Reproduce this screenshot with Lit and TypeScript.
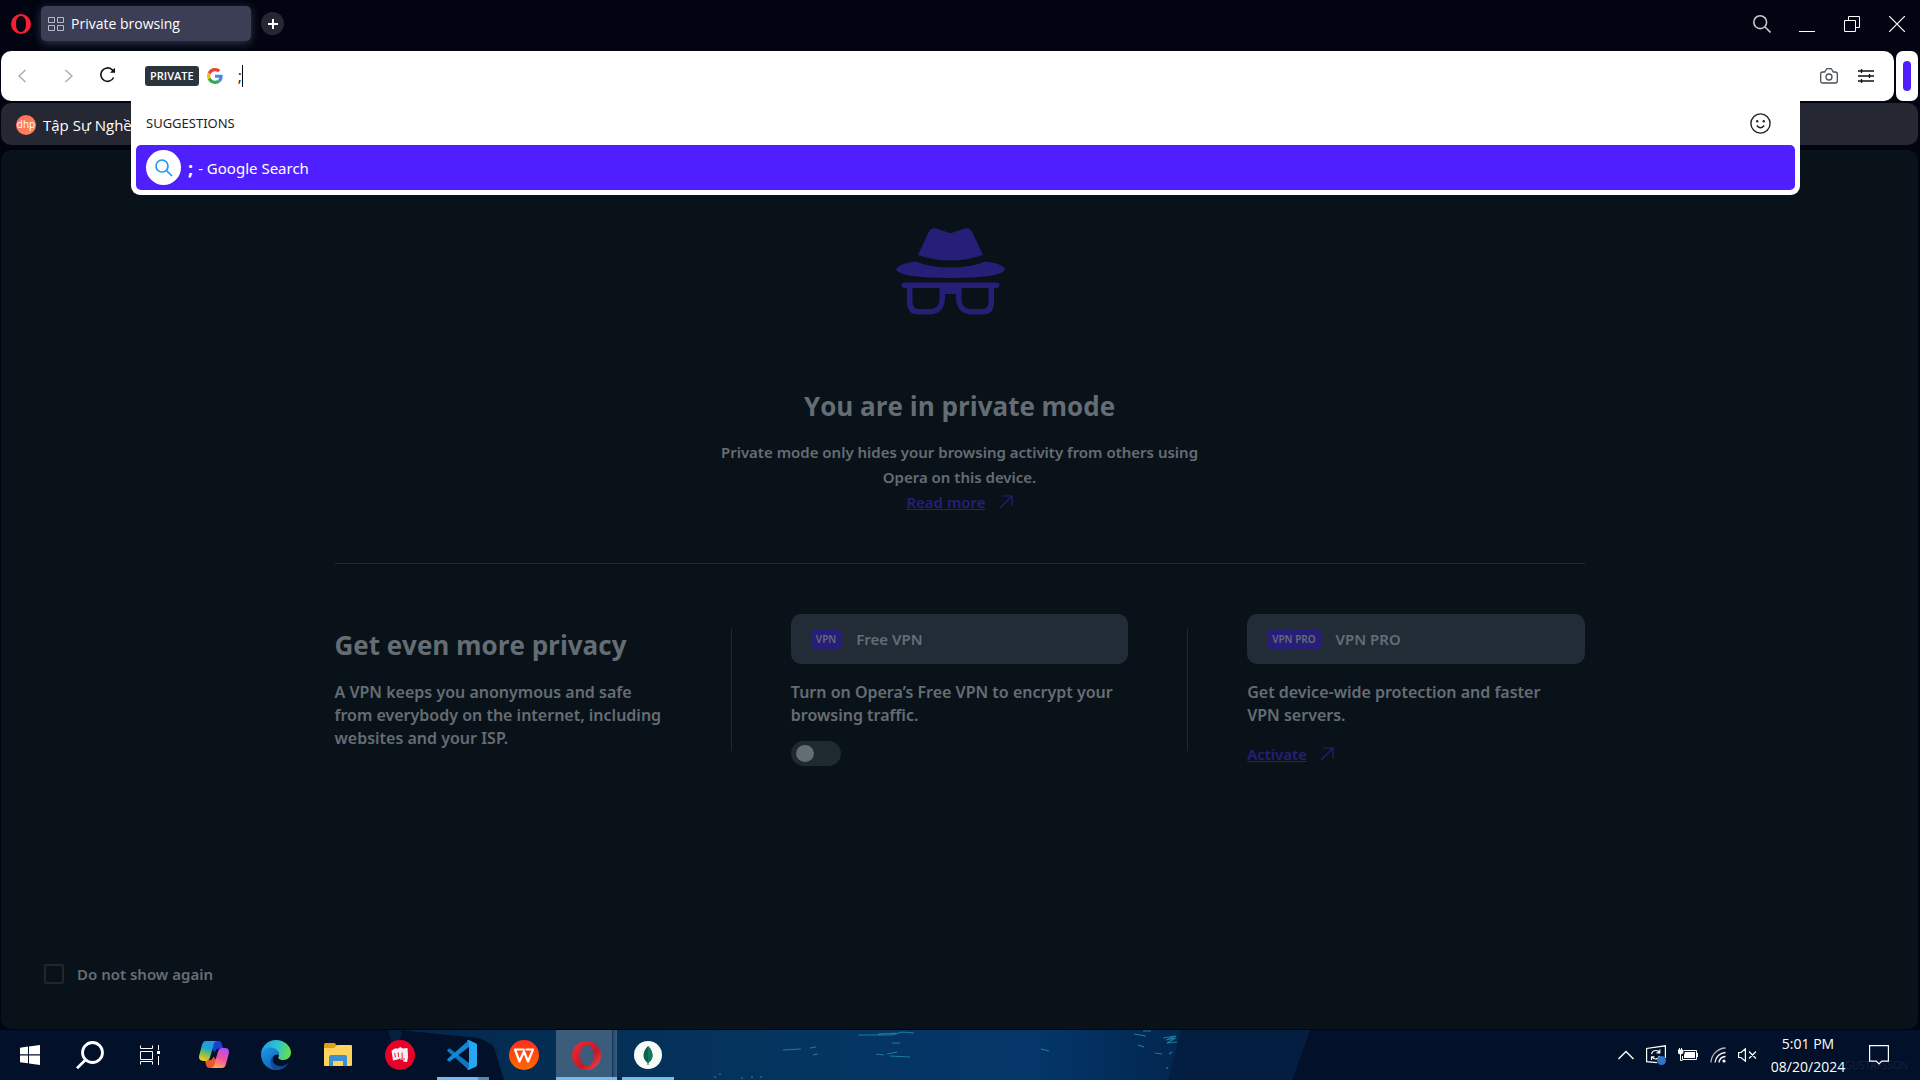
import { LitElement, html, css, svg } from "lit";
import { customElement, state } from "lit/decorators.js";

const arrow = html`<svg class="arrow" width="14" height="14" viewBox="0 0 14 14" fill="none" stroke="currentColor" stroke-width="1.2" aria-hidden="true"><path d="M3 1h10v10M13 1L1 13"/></svg>`;

const operaGradient = svg`<linearGradient id="op" x1="0" y1="0" x2="1" y2="1"><stop offset="0" stop-color="#e8303a"/><stop offset=".6" stop-color="#c81724"/><stop offset="1" stop-color="#f0505a"/></linearGradient>`;

interface App {
  name: string;
  icon: unknown;
  state?: "running" | "active" | "stacked";
}

const apps: App[] = [
  {
    name: "Start",
    icon: html`<svg width="20" height="20" viewBox="0 0 20 20" fill="#fff"><path d="M0 2.7L8 1.6V9.3H0zM9 1.4L20 0v9.3H9zM0 10.4h8v7.9L0 17.2zM9 10.4h11V20L9 18.5z"/></svg>`,
  },
  {
    name: "Search",
    icon: html`<svg width="28" height="28" viewBox="0 0 28 28" fill="none" stroke="#fff" stroke-width="2.8"><circle cx="16.5" cy="11.5" r="10"/><path d="M9.4 19L1 27.2"/></svg>`,
  },
  {
    name: "Task View",
    icon: html`<svg width="20" height="20" viewBox="0 0 20 20" fill="none" stroke="#fff" stroke-width="1"><path d="M.5 .5v3h12v-3M.5 6.500h12v8H.5zM.5 19.500v-3h12v3M18.500 0v5M18.500 11v9"/><rect x="17" y="6" width="3" height="3" fill="#fff" stroke="none"/></svg>`,
  },
  {
    name: "Copilot",
    icon: html`<svg width="30" height="28" viewBox="0 0 30 28">
      <defs>
        <linearGradient id="c1" x1=".6" y1="0" x2=".3" y2="1"><stop offset="0" stop-color="#1b9af2"/><stop offset=".4" stop-color="#20a5c8"/><stop offset=".7" stop-color="#8ac04a"/><stop offset="1" stop-color="#f6cf10"/></linearGradient>
        <linearGradient id="c2" x1=".7" y1="0" x2=".3" y2="1"><stop offset="0" stop-color="#b24df0"/><stop offset=".5" stop-color="#f0549c"/><stop offset="1" stop-color="#ffa95e"/></linearGradient>
      </defs>
      <path d="M16 0h3.500c2 0 2.800 1.200 3.400 3l1.300 4.700h-4c-2.500 0-3.500 1-4.200 3.500l-3-3z" fill="#1b3fd0"/>
      <path d="M14 27h-3.500c-2 0-2.800-1.200-3.400-3L6 19.300h4c2.500 0 3.500-1 4.200-3.500l3 3z" fill="#f0562e"/>
      <path d="M7 0h11c-2 .3-2.800 2-3.400 4l-3.300 11.500c-.9 3-2 4.500-5 4.500H4c-3.500 0-4.600-2.600-3.700-6L3 4C3.700 1.500 4.800 0 7 0z" fill="url(#c1)"/>
      <path d="M23 27H12c2-.3 2.800-2 3.400-4l3.300-11.500c.9-3 2-4.500 5-4.500H26c3.500 0 4.600 2.600 3.700 6L27 23c-.7 2.500-1.800 4-4 4z" fill="url(#c2)"/>
    </svg>`,
  },
  {
    name: "Microsoft Edge",
    icon: html`<svg width="30" height="30" viewBox="0 0 30 30">
      <defs>
        <linearGradient id="e1" x1="0" y1=".3" x2="1" y2=".5"><stop offset="0" stop-color="#1e9de8"/><stop offset=".5" stop-color="#2cc3d2"/><stop offset="1" stop-color="#64e048"/></linearGradient>
        <linearGradient id="e2" x1="0" y1="0" x2=".6" y2="1"><stop offset="0" stop-color="#1c9be6"/><stop offset="1" stop-color="#0f62b8"/></linearGradient>
      </defs>
      <path d="M0 14C.6 6 7 0 15 0s15 6 15 12.500c0 4.500-3.500 7.500-7.500 7.500-4 0-6-1.500-5-3 2-3-.5-8-7-8C5 9 1.500 11 0 14z" fill="url(#e1)"/>
      <path d="M0 14c1.500-4.500 5.500-7 10-6.500 5.500.5 8.500 4 8 8-1.500-2-6-1-6.500 3-.6 5 4 9.500 7.500 11C8 32 0 24 0 14z" fill="url(#e2)"/>
      <path d="M11.700 16.500c-2 6 4 11 10 9.500 2.500-.6 4.500-2 6-3.500C24 28.500 19 30.500 15 30 9 28.500 8 20 11.700 16.500z" fill="#104c92"/>
    </svg>`,
  },
  {
    name: "File Explorer",
    icon: html`<svg width="28" height="24" viewBox="0 0 28 24">
      <path d="M0 1.500Q0 0 1.500 0h9L13 2.500V6H0z" fill="#e0a010"/><path d="M0 5h10l3-3h14q1 0 1 1v19q0 1-1 1H1q-1 0-1-1z" fill="#ffd45e"/>
      <path d="M5 23v-9q0-2 2-2h14q2 0 2 2v9h-4v-5H9v5z" fill="#3d8fd6"/>
    </svg>`,
  },
  {
    name: "Launcher",
    icon: html`<svg width="30" height="30" viewBox="0 0 30 30"><circle cx="15" cy="15" r="15" fill="#ea0029"/>
      <path d="M6.500 10.800l3.700-2.500 2.300.4L15.500 7l2.200 1.400L22.500 8l.6 9-1 5-3.800-.6v-1.600h-3l-.2-1.400-2.600 1L8 20.600z" fill="#f7eff0"/><path d="M9.800 13l.5 4.500M13.200 12.500l.3 4.500M17 12.500l.2 5.500M15.500 19h4.500" fill="none" stroke="#ea0029" stroke-width=".9"/></svg>`,
  },
  {
    name: "Visual Studio Code",
    state: "stacked",
    icon: html`<svg width="30" height="30" viewBox="0 0 30 30">
      <path d="M2.500 8.200L22 23v7L.6 11.200q-.8-1 0-1.800z" fill="#0a7ac4"/><path d="M2.500 21.800L22 7V0L.6 18.800q-.8 1 0 1.800z" fill="#1486d2"/><path d="M21.500 0l7.300 3.200Q30 3.800 30 5v20q0 1.200-1.200 1.800L21.500 30q-1 0-1.500-1l2-1.500v-25L20 1q.5-1 1.500-1z" fill="#25a8f2"/>
    </svg>`,
  },
  {
    name: "WPS Office",
    icon: html`<svg width="30" height="30" viewBox="0 0 30 30"><defs><linearGradient id="w" x1="0" y1="0" x2="0" y2="1"><stop offset="0" stop-color="#ff2d1a"/><stop offset="1" stop-color="#ff6a00"/></linearGradient></defs><circle cx="15" cy="15" r="15" fill="url(#w)"/>
      <path d="M15 9.500H6l4.500 12L15 11.500l4 10 5-12h-6.500" fill="none" stroke="#fff" stroke-width="2.200" stroke-linejoin="round" stroke-linecap="round"/></svg>`,
  },
  {
    name: "Opera",
    state: "active",
    icon: html`<svg width="29" height="29" viewBox="0 0 29 29"><defs>${operaGradient}</defs><path fill-rule="evenodd" fill="url(#op)" d="M14.500 0a14.500 14.500 0 1 0 0 29a14.500 14.500 0 1 0 0-29zM15.500 4.200c4 0 6 4.600 6 10.300s-2 10.300-6 10.300-7.500-4.600-7.500-10.300S11.500 4.200 15.500 4.200z"/></svg>`,
  },
  {
    name: "MongoDB Compass",
    state: "running",
    icon: html`<svg width="28" height="28" viewBox="0 0 28 28"><circle cx="14" cy="14" r="14" fill="#f9fbfa"/><path d="M14 5c3 3 4.500 6 4.500 9.500 0 3-1.500 5.500-4 7.300V24h-1v-2.200c-2.500-1.800-4-4.300-4-7.300C9.500 11 11 8 14 5z" fill="#116149"/><path d="M14 5c3 3 4.500 6 4.500 9.500 0 3-1.500 5.500-4.500 7.500z" fill="#13795b"/></svg>`,
  },
];

@customElement("opera-titlebar")
class OperaTitlebar extends LitElement {
  static styles = css`
    :host { display: flex; align-items: center; height: 51px; padding: 0 13px 0 11px; color: #fff; font-family: "Open Sans", "Noto Sans", sans-serif; }
    button { border: 0; background: none; color: inherit; padding: 0; font: inherit; display: flex; align-items: center; justify-content: center; }
    svg { display: block; }
    .bar { display: flex; align-items: center; width: 100%; padding-bottom: 4px; }
    .tab { width: 210px; height: 35px; margin: 0 10px; padding: 0 7px; gap: 7px; justify-content: flex-start; background: #3b3e54; border-radius: 5px; box-shadow: 0 2px 8px #34374d; font-size: 14px; }
    .plus { width: 23px; height: 23px; border-radius: 50%; background: #252833; }
    .controls { margin-left: auto; display: flex; gap: 25px; }
    .controls button { width: 20px; height: 20px; }
  `;
  render() {
    return html`<div class="bar">
      <button aria-label="Opera menu"><svg width="20" height="20" viewBox="0 0 20 20"><path fill="#fa1e32" fill-rule="evenodd" d="M10 0a10 10 0 1 0 0 20a10 10 0 1 0 0-20zM10 2c3.500 0 5 3.700 5 8s-1.500 8-5 8-5-3.700-5-8 1.500-8 5-8z"/></svg></button>
      <button class="tab"><svg width="16" height="14" viewBox="0 0 16 14" fill="none" stroke="#b9bbc8"><path d="M.5 .5h6v5h-6zM9.500 .5h6v5h-6zM.5 8.500h6v5h-6zM9.500 8.500h6v5h-6z"/></svg><span>Private browsing</span></button>
      <button class="plus" aria-label="New tab"><svg width="10" height="10" viewBox="0 0 10 10" stroke="#fff" stroke-width="2"><path d="M5 0v10M0 5h10"/></svg></button>
      <div class="controls">
        <button aria-label="Search tabs"><svg width="18" height="18" viewBox="0 0 18 18" fill="none" stroke="#c6c8d0" stroke-width="1.600"><circle cx="7.200" cy="7.200" r="6.400"/><path d="M11.800 11.800L17.500 17.500"/></svg></button>
        <button aria-label="Minimize"><svg width="16" height="16" viewBox="0 0 16 16" stroke="#fff"><path d="M0 15.500h16"/></svg></button>
        <button aria-label="Restore"><svg width="16" height="16" viewBox="0 0 16 16" fill="none" stroke="#fff"><path d="M.5 4.500h11v11H.5zM4.500 4.500v-4h11v11h-4"/></svg></button>
        <button aria-label="Close"><svg width="16" height="16" viewBox="0 0 16 16" stroke="#fff" stroke-width="1.200"><path d="M0 0l16 16M16 0L0 16"/></svg></button>
      </div></div>`;
  }
}

@customElement("opera-toolbar")
class OperaToolbar extends LitElement {
  static styles = css`
    :host { display: block; position: relative; z-index: 2; padding: 0 2px 0 1px; font-family: "Open Sans", "Noto Sans", sans-serif; color: #1c1e26; }
    button { border: 0; background: none; color: inherit; padding: 0; font: inherit; display: flex; align-items: center; justify-content: center; }
    svg { display: block; }
    .row { display: flex; gap: 2px; }
    .address { flex: 1; display: flex; align-items: center; height: 50px; background: #fff; border-radius: 10px; padding: 0 20px 0 17px; }
    .nav { display: flex; align-items: center; gap: 39px; color: #a6a7ab; }
    .reload { margin: 0 29px 3px 27px; }
    .badge { height: 20px; padding: 0 5px; margin-right: 8px; border-radius: 3px; background: #29343c; color: #fff; font-size: 11px; font-weight: 600; line-height: 20px; }
    .field { flex: 1; display: flex; align-items: center; margin-left: 15px; }
    input { border: 0; outline: 0; padding: 0; background: none; width: 4px; font: 16px "Open Sans", sans-serif; color: #1c1e26; overflow: hidden; }
    .caret { width: 1px; height: 22px; background: #000; }
    .tools { display: flex; gap: 20px; align-items: center; }
    .side { width: 22px; height: 50px; background: #fff; border-radius: 7px; }
    .side i { width: 8px; height: 30px; border-radius: 4px; background: #4f1fff; }
    .bookmarks { display: flex; align-items: center; height: 42px; margin-top: 2px; padding: 0 15px; background: #252833; border-radius: 10px; color: #fff; font-size: 15px; }
    .bookmarks a { display: flex; align-items: center; gap: 7px; padding-top: 2px; color: inherit; text-decoration: none; white-space: nowrap; }
    .dhp { width: 20px; height: 20px; border-radius: 50%; background: linear-gradient(135deg, #ff6a5e, #ff8a5a); font-size: 10px; line-height: 19px; text-align: center; }
    .drop { position: absolute; top: 50px; left: 131px; right: 120px; background: #fff; border-radius: 0 0 9px 9px; padding: 0 5px 5px; font-family: "Noto Sans", "Open Sans", sans-serif; }
    .head { display: flex; align-items: center; justify-content: space-between; height: 44px; padding: 0 24px 0 10px; font-size: 13px; color: #1f2226; }
    .hit { width: 100%; height: 45px; padding: 0 10px; gap: 7px; justify-content: flex-start; border-radius: 5px; background: #4f1fff; color: #fff; font-size: 15px; line-height: 20px; }
    .match { display: flex; align-items: center; gap: 5px; }
    .match b { font-size: 18px; }
    .disc { width: 35px; height: 35px; border-radius: 50%; background: #fff; display: flex; align-items: center; justify-content: center; }
  `;
  render() {
    return html`
      <div class="row">
        <div class="address">
          <div class="nav">
            <button aria-label="Back"><svg width="8" height="14" viewBox="0 0 8 14" fill="none" stroke="currentColor" stroke-width="1.300"><path d="M7.500 1L1 7l6.500 6"/></svg></button>
            <button aria-label="Forward"><svg width="8" height="14" viewBox="0 0 8 14" fill="none" stroke="currentColor" stroke-width="1.300"><path d="M.5 1L7 7l-6.500 6"/></svg></button>
          </div>
          <button class="reload" aria-label="Reload"><svg width="16" height="16" viewBox="0 0 16 16" fill="none" stroke="#111" stroke-width="1.600"><path d="M13.600 10.500A6.700 6.700 0 1 1 12 2.600l2 2"/><path d="M15 .8v5h-5z" fill="#111" stroke="none"/></svg></button>
          <span class="badge">PRIVATE</span>
          <svg width="16" height="16" viewBox="0 0 48 48" role="img" aria-label="Google"><path fill="#ea4335" d="M24 9.500c3.540 0 6.710 1.220 9.210 3.600l6.850-6.850C35.900 2.380 30.470 0 24 0 14.620 0 6.510 5.380 2.560 13.220l7.980 6.190C12.430 13.720 17.740 9.500 24 9.500z"/><path fill="#4285f4" d="M46.980 24.550c0-1.570-.15-3.090-.38-4.550H24v9.020h12.940c-.58 2.960-2.260 5.480-4.780 7.180l7.730 6c4.510-4.180 7.090-10.360 7.090-17.650z"/><path fill="#fbbc05" d="M10.530 28.590c-.48-1.450-.76-2.990-.76-4.590s.27-3.140.76-4.590l-7.980-6.190C.92 16.460 0 20.120 0 24c0 3.880.92 7.540 2.560 10.780l7.970-6.190z"/><path fill="#34a853" d="M24 48c6.480 0 11.930-2.130 15.890-5.810l-7.730-6c-2.150 1.450-4.920 2.300-8.160 2.300-6.260 0-11.570-4.220-13.470-9.910l-7.980 6.190C6.510 42.620 14.620 48 24 48z"/></svg>
          <div class="field"><input aria-label="Address" value=";" /><span class="caret"></span></div>
          <div class="tools">
            <button aria-label="Snapshot"><svg width="18" height="16" viewBox="0 0 18 16" fill="none" stroke="#4a5057" stroke-width="1.300"><path d="M.7 6q0-2 2-2h2L6 1.700q.5-1 1.500-1h3q1 0 1.500 1L13.300 4h2q2 0 2 2v7q0 2-2 2H2.700q-2 0-2-2z"/><circle cx="9" cy="9" r="3"/></svg></button>
            <button aria-label="Easy setup"><svg width="16" height="14" viewBox="0 0 16 14" stroke="#111" stroke-width="1.300"><path d="M0 2h16M0 7h16M0 12h16M3.500 0v4M11.500 5v4M3.500 10v4"/></svg></button>
          </div>
        </div>
        <button class="side" aria-label="Sidebar"><i></i></button>
      </div>
      <div class="bookmarks"><a href="#"><span class="dhp">dhp</span><span>Tập Sự Nghề</span></a></div>
      <div class="drop">
        <div class="head"><span>SUGGESTIONS</span>
          <button aria-label="Emoji"><svg width="21" height="21" viewBox="0 0 21 21" fill="none" stroke="#1f2226" stroke-width="1.400"><circle cx="10.500" cy="10.500" r="9.600"/><path d="M6.800 12.500q3.700 4.600 7.400 0"/><circle cx="7.200" cy="8.300" r="1.200" fill="#1f2226" stroke="none"/><circle cx="13.800" cy="8.300" r="1.200" fill="#1f2226" stroke="none"/></svg></button>
        </div>
        <button class="hit"><span class="disc"><svg width="18" height="18" viewBox="0 0 18 18" fill="none" stroke="#1c9cf6" stroke-width="1.700"><circle cx="7" cy="7" r="6"/><path d="M11.300 11.300L17 17"/></svg></span><span class="match"><b>;</b><span>- Google Search</span></span></button>
      </div>`;
  }
}

@customElement("private-page")
class PrivatePage extends LitElement {
  @state() private vpn = false;
  static styles = css`
    :host { flex: 1; margin: 5px 2px 1px 1px; display: flex; flex-direction: column; background: #0a1219; border-radius: 10px; color: #656d74; font-family: "Noto Sans", "Open Sans", sans-serif; font-weight: 600; font-size: 15px; }
    svg { display: block; }
    h1, h2, p { margin: 0; }
    h1, h2 { font-family: "Open Sans", sans-serif; font-size: 26px; line-height: 36px; font-weight: 700; }
    a { color: #271e78; display: inline-flex; align-items: center; gap: 13px; text-decoration: none; line-height: 24px; }
    a span { text-decoration: underline; }
    .intro { display: flex; flex-direction: column; align-items: center; text-align: center; padding-top: 78px; }
    .hat { margin: 0 18px 73px 0; }
    .intro p { width: 500px; margin-top: 16px; line-height: 25px; }
    .columns { width: 66%; max-width: 1250px; margin: 49px auto 0; padding-top: 50px; border-top: 1px solid #1e2a33; display: grid; grid-template-columns: 1fr 1fr 1fr; column-gap: 119px; }
    .col { position: relative; font-size: 16px; line-height: 23px; }
    .col + .col::before { content: ""; position: absolute; left: -60px; top: 15px; height: 122px; width: 1px; background: #1e2a33; }
    h2 { padding: 13px 0 18px; }
    .card { display: flex; align-items: center; gap: 15px; height: 50px; padding: 0 20px; border-radius: 10px; background: #212c36; font-size: 15px; margin-bottom: 17px; }
    .tag { height: 20px; line-height: 20px; padding: 0 5px; border-radius: 4px; background: #271e78; font-size: 10px; }
    .col a { font-size: 15px; margin-top: 15px; }
    .switch { appearance: none; display: block; box-sizing: border-box; width: 50px; height: 25px; margin: 14px 0 0; padding: 4px 5px; border-radius: 13px; background: #1f2930; }
    .switch::before { content: ""; display: block; width: 18px; height: 17px; border-radius: 50%; background: #656d74; }
    .again { display: flex; align-items: center; gap: 13px; margin: auto 0 43px 43px; align-self: flex-start; line-height: 24px; }
    .again input { appearance: none; box-sizing: border-box; width: 20px; height: 20px; margin: 0; border: 2px solid #1d2730; border-radius: 2px; }
  `;
  render() {
    return html`
      <section class="intro">
        <svg class="hat" width="109" height="87" viewBox="0 0 109 87" fill="#271e78" aria-hidden="true">
          <path d="M33 3.500Q35 -.6 39.500 .3L54.500 5.300 69.500 .3Q74 -.6 76 3.500L87 27Q71 32.500 54.500 32.500T22 27z"/>
          <path d="M19.500 33.500Q34 39.500 54.500 39.500T89.500 33.500Q108 36 109 41.500 105 50 54.500 50T0 41.500Q1.500 36 19.500 33.500z"/>
          <path fill-rule="evenodd" d="M8.500 54.500h92q3 0 3 2.500t-3 3H98V74q0 12.500-11 12.500H76Q60.500 86 60 70V66H49v4Q48.500 86 33 86.500H22Q11 86.500 11 74V60H8.500q-3-.5-3-3t3-2.500zM16.500 60v14q0 7 6 7H34q9.500 0 9.500-11V60zM65.500 60v10q0 11 9.500 11h11.500q6 0 6-7V60z"/>
        </svg>
        <h1>You are in private mode</h1>
        <p>Private mode only hides your browsing activity from others using Opera on this device.</p>
        <a href="#"><span>Read more</span>${arrow}</a>
      </section>
      <section class="columns">
        <div class="col"><h2>Get even more privacy</h2><p>A VPN keeps you anonymous and safe from everybody on the internet, including websites and your ISP.</p></div>
        <div class="col"><div class="card"><span class="tag">VPN</span><span>Free VPN</span></div><p>Turn on Opera’s Free VPN to encrypt your browsing traffic.</p>
          <input class="switch" type="checkbox" role="switch" aria-label="Free VPN" .checked=${this.vpn} @change=${(e: Event) => (this.vpn = (e.target as HTMLInputElement).checked)} /></div>
        <div class="col"><div class="card"><span class="tag">VPN PRO</span><span>VPN PRO</span></div><p>Get device-wide protection and faster<br />VPN servers.</p>
          <a href="#"><span>Activate</span>${arrow}</a></div>
      </section>
      <label class="again"><input type="checkbox" /><span>Do not show again</span></label>`;
  }
}

@customElement("win-taskbar")
class WinTaskbar extends LitElement {
  static styles = css`
    :host { display: flex; position: relative; height: 50px; background: #021029; color: #fff; font-family: "Open Sans", "Noto Sans", sans-serif; overflow: hidden; }
    button { border: 0; background: none; color: inherit; padding: 0; font: inherit; display: flex; align-items: center; justify-content: center; }
    svg { display: block; }
    .wall { position: absolute; inset: 0; width: 100%; height: 100%; }
    .apps, .tray { position: relative; display: flex; align-items: stretch; }
    .app { width: 62px; position: relative; }
    .app:nth-child(-n + 3) { width: 60px; }
    .app:nth-child(3) { margin-right: 3px; }
    .app::after { content: ""; position: absolute; inset: auto 5px 0; height: 3px; }
    .running::after { background: #76b9ed; }
    .stacked::after { right: 4px; left: 6px; background: linear-gradient(90deg, #76b9ed 41px, #5b86ae 41px); }
    .active { background: linear-gradient(90deg, transparent 1px, #ffffff38 1px, #ffffff38 57px, #0003 57px, #ffffff20 58px, #ffffff38 62px); }
    .active::after { left: 1px; right: 0; background: #76b9ed; }
    .tray { margin-left: auto; align-items: center; gap: 12px; padding-right: 31px; }
    .clock { flex-direction: column; font-size: 14px; line-height: 23px; width: 78px; }
    .note { margin-left: 10px; }
    .credit { position: absolute; right: 12px; bottom: 8px; font-size: 10px; color: #14233d; }
  `;
  render() {
    return html`
      <svg class="wall" viewBox="0 0 1920 50" preserveAspectRatio="none" aria-hidden="true">
        <defs><linearGradient id="sea" x1="0" x2="1"><stop offset="0" stop-color="#04264c"/><stop offset=".25" stop-color="#043058"/><stop offset=".45" stop-color="#043560"/><stop offset=".7" stop-color="#04366a"/><stop offset=".82" stop-color="#032a55"/><stop offset="1" stop-color="#03203f"/></linearGradient></defs>
        <path fill="url(#sea)" d="M386 0H1310L1292 50H504L494 17Q490 12 478 8L400 0z"/>
        <path fill="#04203f" d="M388 0h14l-3 16h-7z"/>
        <path fill="#031e41" d="M1181 0H1310L1292 50H1168z"/>
        <g fill="none" stroke="#1f8aa8" stroke-width="1.200" opacity=".85"><path d="M872 5h20l10-3 12 1M878 4l22-1M858 5h26l-6-1M783 20l18-1M810 18l6-1M897 22l-10 2M892 13h8M876 24l8 1M890 26l20 1M1138 15l6 2M1155 23l7 1M1163 8l13-2-10 4 10-2-9 5 10-1M1134 4l12 2M1143 1h8M1041 19l8 2M1172 22l-3 2M818 24l-5 1"/></g>
        <g fill="#1a6d90"><circle cx="715" cy="47" r="1"/><circle cx="720" cy="44" r="1"/><circle cx="742" cy="48" r="1"/><circle cx="752" cy="47" r="1"/><circle cx="761" cy="47" r="1"/><circle cx="1167" cy="38" r="1"/></g>
      </svg>
      <span class="credit">GUSTAFSSON</span>
      <div class="apps">${apps.map((a) => html`<button class="app ${a.state ?? ""}" aria-label=${a.name}>${a.icon}</button>`)}</div>
      <div class="tray">
        <button aria-label="Hidden icons"><svg width="16" height="10" viewBox="0 0 16 10" fill="none" stroke="#fff" stroke-width="1.400"><path d="M.5 9L8 1.500 15.500 9"/></svg></button>
        <button aria-label="Windows Update"><svg width="20" height="20" viewBox="0 0 20 20" fill="none" stroke="#fff" stroke-width="1.200"><path d="M11 17.600L.6 16.600V3.400L19.400 .8V13"/><path d="M5.500 9q1-3.500 4.500-3.500 2.500 0 3.500 2M13.800 4.500v3.300h-3.300M13.500 11q-1 3-4 3-2 0-3.500-2M5.500 15v-3.200h3"/><circle cx="15.500" cy="15.500" r="4.500" fill="#2a76c8" stroke="none"/></svg></button>
        <button aria-label="Battery"><svg width="20" height="14" viewBox="0 0 20 14" fill="none" stroke="#fff"><path d="M6 2.500h12.500v9H4.500V8M19.500 5v4"/><path d="M7 4h10v6H6V7z" fill="#fff" stroke="none"/><path d="M0 2h5v2q0 2-2.500 2T0 4z" fill="#fff"/><path d="M1.500 0v2M3.500 0v2M2.500 6v6.500h2"/></svg></button>
        <button aria-label="Network"><svg width="16" height="16" viewBox="0 0 16 16" fill="none" stroke="#fff" stroke-width="1.300"><path d="M1 15.500A15 15 0 0 1 15.500 1" opacity=".7"/><path d="M5 15.500A11 11 0 0 1 15.500 5.500M9 15.500a7 7 0 0 1 6.500-6"/><circle cx="14" cy="14" r="1.600" fill="#fff" stroke="none"/></svg></button>
        <button aria-label="Volume muted"><svg width="19" height="14" viewBox="0 0 19 14" fill="none" stroke="#fff" stroke-width="1.200"><path d="M.6 4.500H3L7.400 .8v12.400L3 9.500H.6zM11 3.500l7 7M18 3.500l-7 7"/></svg></button>
        <button class="clock"><span>5:01 PM</span><span>08/20/2024</span></button>
        <button class="note" aria-label="Notifications"><svg width="20" height="20" viewBox="0 0 20 20" fill="none" stroke="#fff" stroke-width="1.200"><path d="M.6 .6h18.800v15.600h-6.600L10 19l-2.800-2.800H.6z"/></svg></button>
      </div>`;
  }
}

@customElement("app-root")
class AppRoot extends LitElement {
  static styles = css`
    :host { display: flex; flex-direction: column; min-height: 100vh; background: #020511; }
  `;
  render() {
    return html`<opera-titlebar></opera-titlebar><opera-toolbar></opera-toolbar><private-page></private-page><win-taskbar></win-taskbar>`;
  }
}
